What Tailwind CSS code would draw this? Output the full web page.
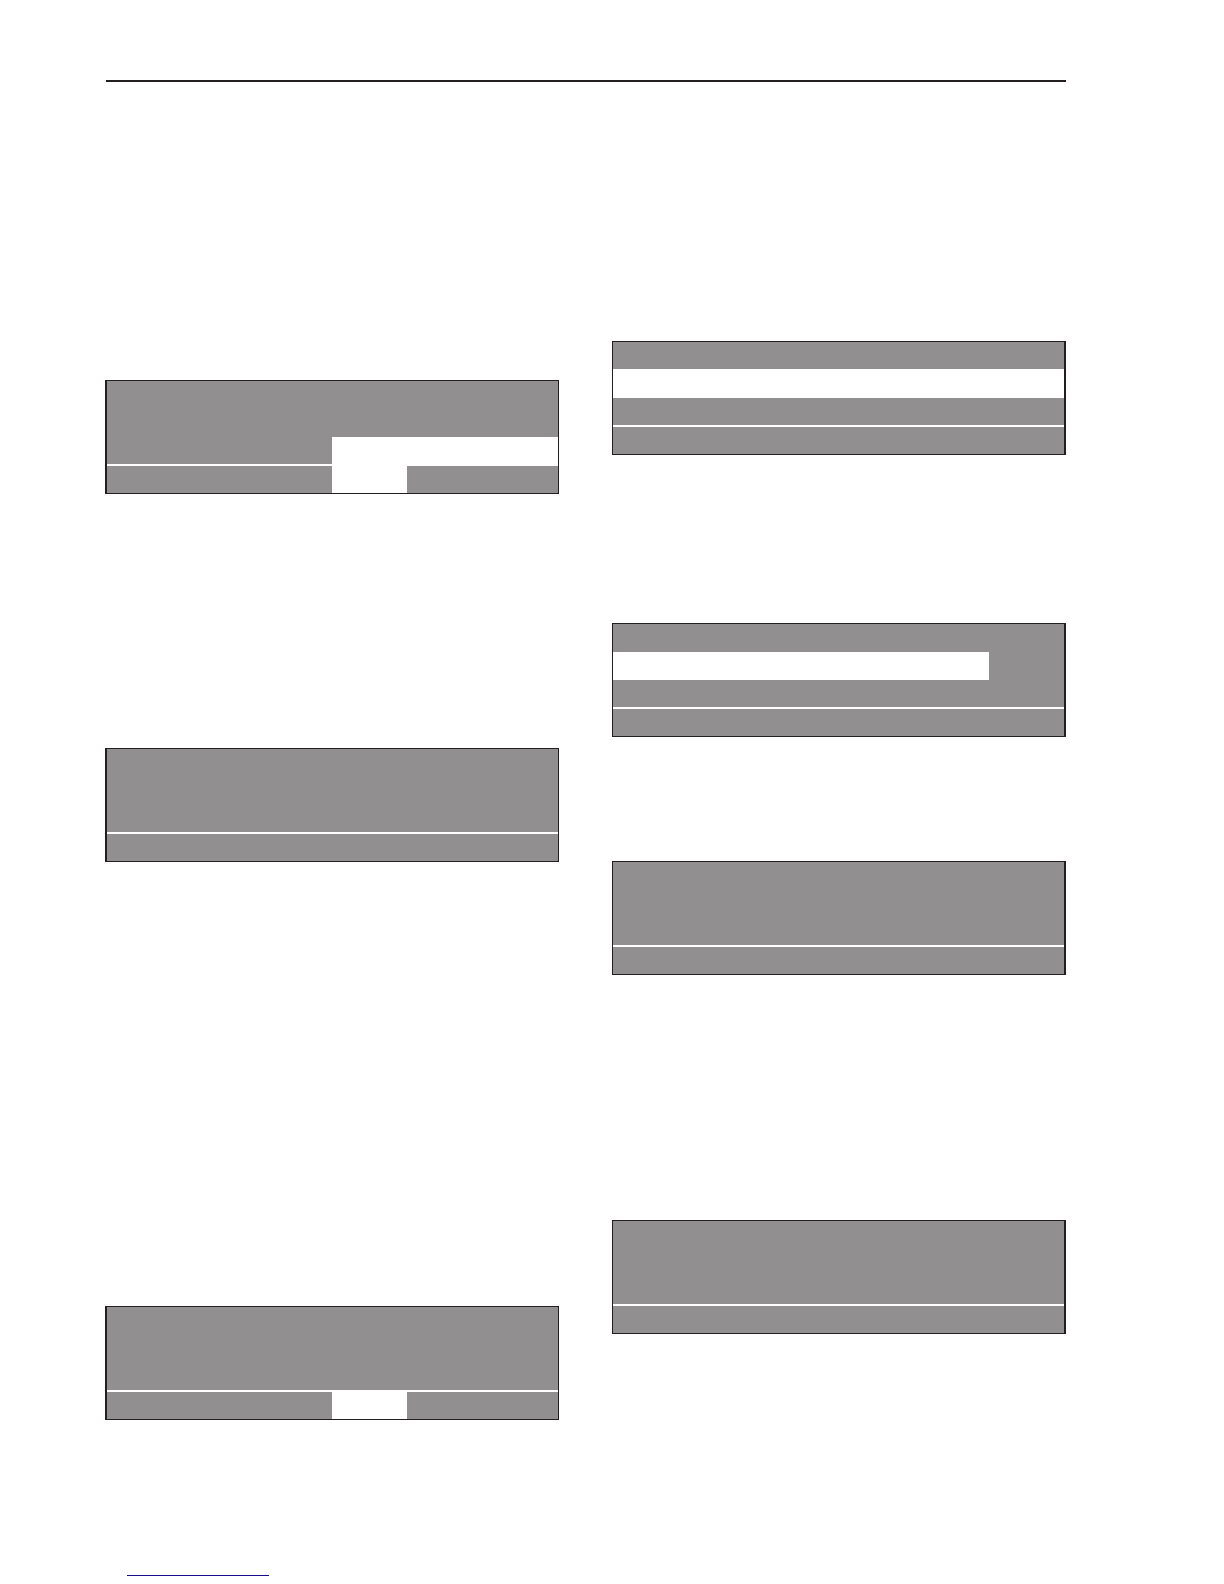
<!DOCTYPE html>
<html lang="en">
<head>
    <meta charset="UTF-8">
    <meta name="viewport" content="width=device-width, initial-scale=1.0">
    <title>Display panels</title>
    <script src="https://cdn.jsdelivr.net/npm/@tailwindcss/browser@4"></script>
</head>
<body class="bg-white font-['Liberation_Sans',sans-serif]">
    <div class="min-h-screen pt-20 pl-[105px] pr-[158px]">
        <!-- Header rule -->
        <hr class="ml-px border-t-2 border-[#231f20]">

        <main class="grid grid-cols-2 gap-[53px]">
            <!-- Left column -->
            <div>
                <!-- Entry selected, with its soft key -->
                <section class="mt-[298px] border border-l-2 border-[#231f20] bg-[#918f90]">
                    <div class="h-14"></div>
                    <div class="grid grid-cols-[225px_1fr]">
                        <div class="h-[29px] border-b-2 border-white"></div>
                        <div class="bg-white"></div>
                    </div>
                    <div class="grid h-[27px] grid-cols-[225px_75px_1fr]">
                        <div class="col-start-2 bg-white"></div>
                    </div>
                </section>

                <section class="mt-[254px] border border-l-2 border-[#231f20] bg-[#918f90]">
                    <div class="h-[85px] border-b-2 border-white"></div>
                    <div class="h-[27px]"></div>
                </section>

                <!-- Soft key selected -->
                <section class="mt-[444px] border border-l-2 border-[#231f20] bg-[#918f90]">
                    <div class="h-[85px] border-b-2 border-white"></div>
                    <div class="grid h-[27px] grid-cols-[225px_75px_1fr]">
                        <div class="col-start-2 bg-white"></div>
                    </div>
                </section>

                <!-- Footer link -->
                <a href="#" class="mt-[155px] ml-[22px] block w-[142px] border-b border-[#1a0d8c]"></a>
            </div>

            <!-- Right column -->
            <div>
                <!-- Full row selected -->
                <section class="mt-[259px] border border-r-2 border-[#231f20] bg-[#918f90]">
                    <div class="h-[27px]"></div>
                    <div class="h-[29px] bg-white"></div>
                    <div class="h-[29px] border-b-2 border-white"></div>
                    <div class="h-[27px]"></div>
                </section>

                <!-- Partial row selected -->
                <section class="mt-[168px] border border-r-2 border-[#231f20] bg-[#918f90]">
                    <div class="h-7"></div>
                    <div class="h-7 w-5/6 bg-white"></div>
                    <div class="h-[29px] border-b-2 border-white"></div>
                    <div class="h-[27px]"></div>
                </section>

                <section class="mt-[124px] border border-r-2 border-[#231f20] bg-[#918f90]">
                    <div class="h-[85px] border-b-2 border-white"></div>
                    <div class="h-[27px]"></div>
                </section>

                <section class="mt-[245px] border border-r-2 border-[#231f20] bg-[#918f90]">
                    <div class="h-[85px] border-b-2 border-white"></div>
                    <div class="h-[27px]"></div>
                </section>
            </div>
        </main>
    </div>
</body>
</html>
